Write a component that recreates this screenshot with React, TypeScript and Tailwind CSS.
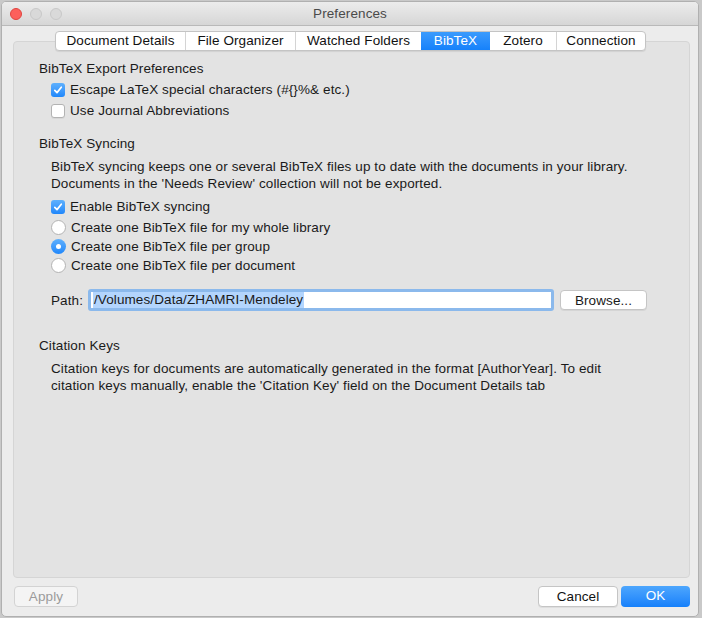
const tabs = ["Document Details", "File Organizer", "Watched Folders", "BibTeX", "Zotero", "Connection"];
const tabWidths = [129, 110, 126, 69, 66, 89];

const Checkbox = ({ checked }: { checked: boolean }) =>
  checked ? (
    <span className="flex h-[14px] w-[14px] items-center justify-center rounded-[3px] bg-gradient-to-b from-[#5eb0fd] to-[#1e87fb]">
      <svg width="10" height="10" viewBox="0 0 10 10">
        <path d="M1.8 5.3 L4 7.6 L8.3 2.2" fill="none" stroke="white" strokeWidth="1.7" strokeLinecap="round" strokeLinejoin="round" />
      </svg>
    </span>
  ) : (
    <span className="h-[14px] w-[14px] rounded-[3px] border border-[#b3b3b3] bg-white shadow-[0_1px_0_rgba(0,0,0,0.05)]" />
  );

const Radio = ({ checked }: { checked: boolean }) =>
  checked ? (
    <span className="flex h-[15px] w-[15px] items-center justify-center rounded-full bg-gradient-to-b from-[#5eb0fd] to-[#1e87fb]">
      <span className="h-[5px] w-[5px] rounded-full bg-white" />
    </span>
  ) : (
    <span className="h-[15px] w-[15px] rounded-full border border-[#b3b3b3] bg-white" />
  );

export default function App() {
  return (
    <div className="h-[618px] w-[702px] bg-[#c9c9c9] pl-[1px] pt-[1px] text-[13.5px] tracking-[0.1px] text-[#1a1a1a]" style={{ fontFamily: '"Liberation Sans", Arial, sans-serif' }}>
      <div className="flex h-[616px] w-[698px] flex-col overflow-hidden rounded-[5px] border border-[#b0b0b0] bg-[#ececec]">
        {/* title bar */}
        <div className="relative flex h-[24px] shrink-0 items-center justify-center border-b border-[#b9b9b9] bg-gradient-to-b from-[#ececec] to-[#d6d6d6]">
          <div className="absolute left-[8px] top-[6px] flex gap-[8px]">
            <span className="h-[12px] w-[12px] rounded-full border border-[#e0443e] bg-[#fc605c]" />
            <span className="h-[12px] w-[12px] rounded-full border border-[#c8c8c8] bg-[#d9d9d9]" />
            <span className="h-[12px] w-[12px] rounded-full border border-[#c8c8c8] bg-[#d9d9d9]" />
          </div>
          <span className="pt-[1px] text-[13.5px] text-[#4a4a4a]">Preferences</span>
        </div>

        {/* tabs */}
        <div className="relative z-10 mt-[5px] flex justify-center pl-[1px]">
          <div className="flex h-[20px] overflow-hidden rounded-[4px] border border-[#c4c4c4] bg-white shadow-[0_1px_1px_rgba(0,0,0,0.08)]">
            {tabs.map((t, i) => (
              <div
                key={t}
                style={{ width: tabWidths[i] }}
                className={
                  t === "BibTeX"
                    ? "flex items-center justify-center bg-gradient-to-b from-[#3a9bfd] to-[#1581fb] text-white"
                    : i > 0 && tabs[i - 1] !== "BibTeX"
                    ? "flex items-center justify-center border-l border-[#d4d4d4] text-[#111]"
                    : "flex items-center justify-center text-[#111]"
                }
              >
                {t}
              </div>
            ))}
          </div>
        </div>

        {/* panel */}
        <div className="-mt-[10px] ml-[11px] mr-[8px] flex-1 rounded-[4px] border border-[#d5d5d5] bg-[#e3e3e3] pl-[25px] pt-[18px] leading-[17px]">
          <div className="h-[17px]">BibTeX Export Preferences</div>
          <div className="mt-[2px] pl-[12px]">
            <div className="flex h-[21px] items-center gap-[5px]">
              <Checkbox checked />
              <span>Escape LaTeX special characters (#{"{}"}%&amp; etc.)</span>
            </div>
            <div className="flex h-[21px] items-center gap-[5px]">
              <Checkbox checked={false} />
              <span>Use Journal Abbreviations</span>
            </div>
          </div>

          <div className="mt-[14px] h-[17px]">BibTeX Syncing</div>
          <div className="mt-[6px] pl-[12px]">
            <p>BibTeX syncing keeps one or several BibTeX files up to date with the documents in your library.</p>
            <p>Documents in the 'Needs Review' collection will not be exported.</p>
            <div className="mt-[4px] flex h-[21px] items-center gap-[5px]">
              <Checkbox checked />
              <span>Enable BibTeX syncing</span>
            </div>
            <div className="mt-[1px]">
              <div className="flex h-[19px] items-center gap-[5px]">
                <Radio checked={false} />
                <span>Create one BibTeX file for my whole library</span>
              </div>
              <div className="flex h-[19px] items-center gap-[5px]">
                <Radio checked />
                <span>Create one BibTeX file per group</span>
              </div>
              <div className="flex h-[19px] items-center gap-[5px]">
                <Radio checked={false} />
                <span>Create one BibTeX file per document</span>
              </div>
            </div>
            <div className="mt-[14px] flex h-[22px] items-center">
              <span className="w-[37px]">Path:</span>
              <div className="flex h-[22px] w-[466px] items-center rounded-[3px] border-[3px] border-[#8bb9ec] bg-white pl-[2px]">
                <span className="bg-[#b3d5fd] px-[1px] leading-[16px]">/Volumes/Data/ZHAMRI-Mendeley</span>
              </div>
              <button className="ml-[6px] h-[20px] w-[87px] rounded-[4px] border border-[#c5c5c5] bg-white shadow-[0_1px_0_rgba(0,0,0,0.06)]">
                Browse...
              </button>
            </div>
          </div>

          <div className="mt-[26px] h-[17px]">Citation Keys</div>
          <div className="mt-[6px] pl-[12px]">
            <p>Citation keys for documents are automatically generated in the format [AuthorYear]. To edit</p>
            <p>citation keys manually, enable the 'Citation Key' field on the Document Details tab</p>
          </div>
        </div>

        {/* footer */}
        <div className="flex h-[38px] shrink-0 items-start pl-[12px] pr-[8px] pt-[8px]">
          <button className="h-[21px] w-[64px] rounded-[4px] border border-[#d3d3d3] bg-[#f4f4f4] text-[#9b9b9b]">
            Apply
          </button>
          <div className="flex-1" />
          <button className="h-[21px] w-[80px] rounded-[4px] border border-[#c5c5c5] bg-white text-[#111] shadow-[0_1px_0_rgba(0,0,0,0.06)]">
            Cancel
          </button>
          <button className="ml-[3px] h-[21px] w-[69px] rounded-[4px] bg-gradient-to-b from-[#4da6fd] to-[#1480fb] text-white">
            OK
          </button>
        </div>
      </div>
    </div>
  );
}
